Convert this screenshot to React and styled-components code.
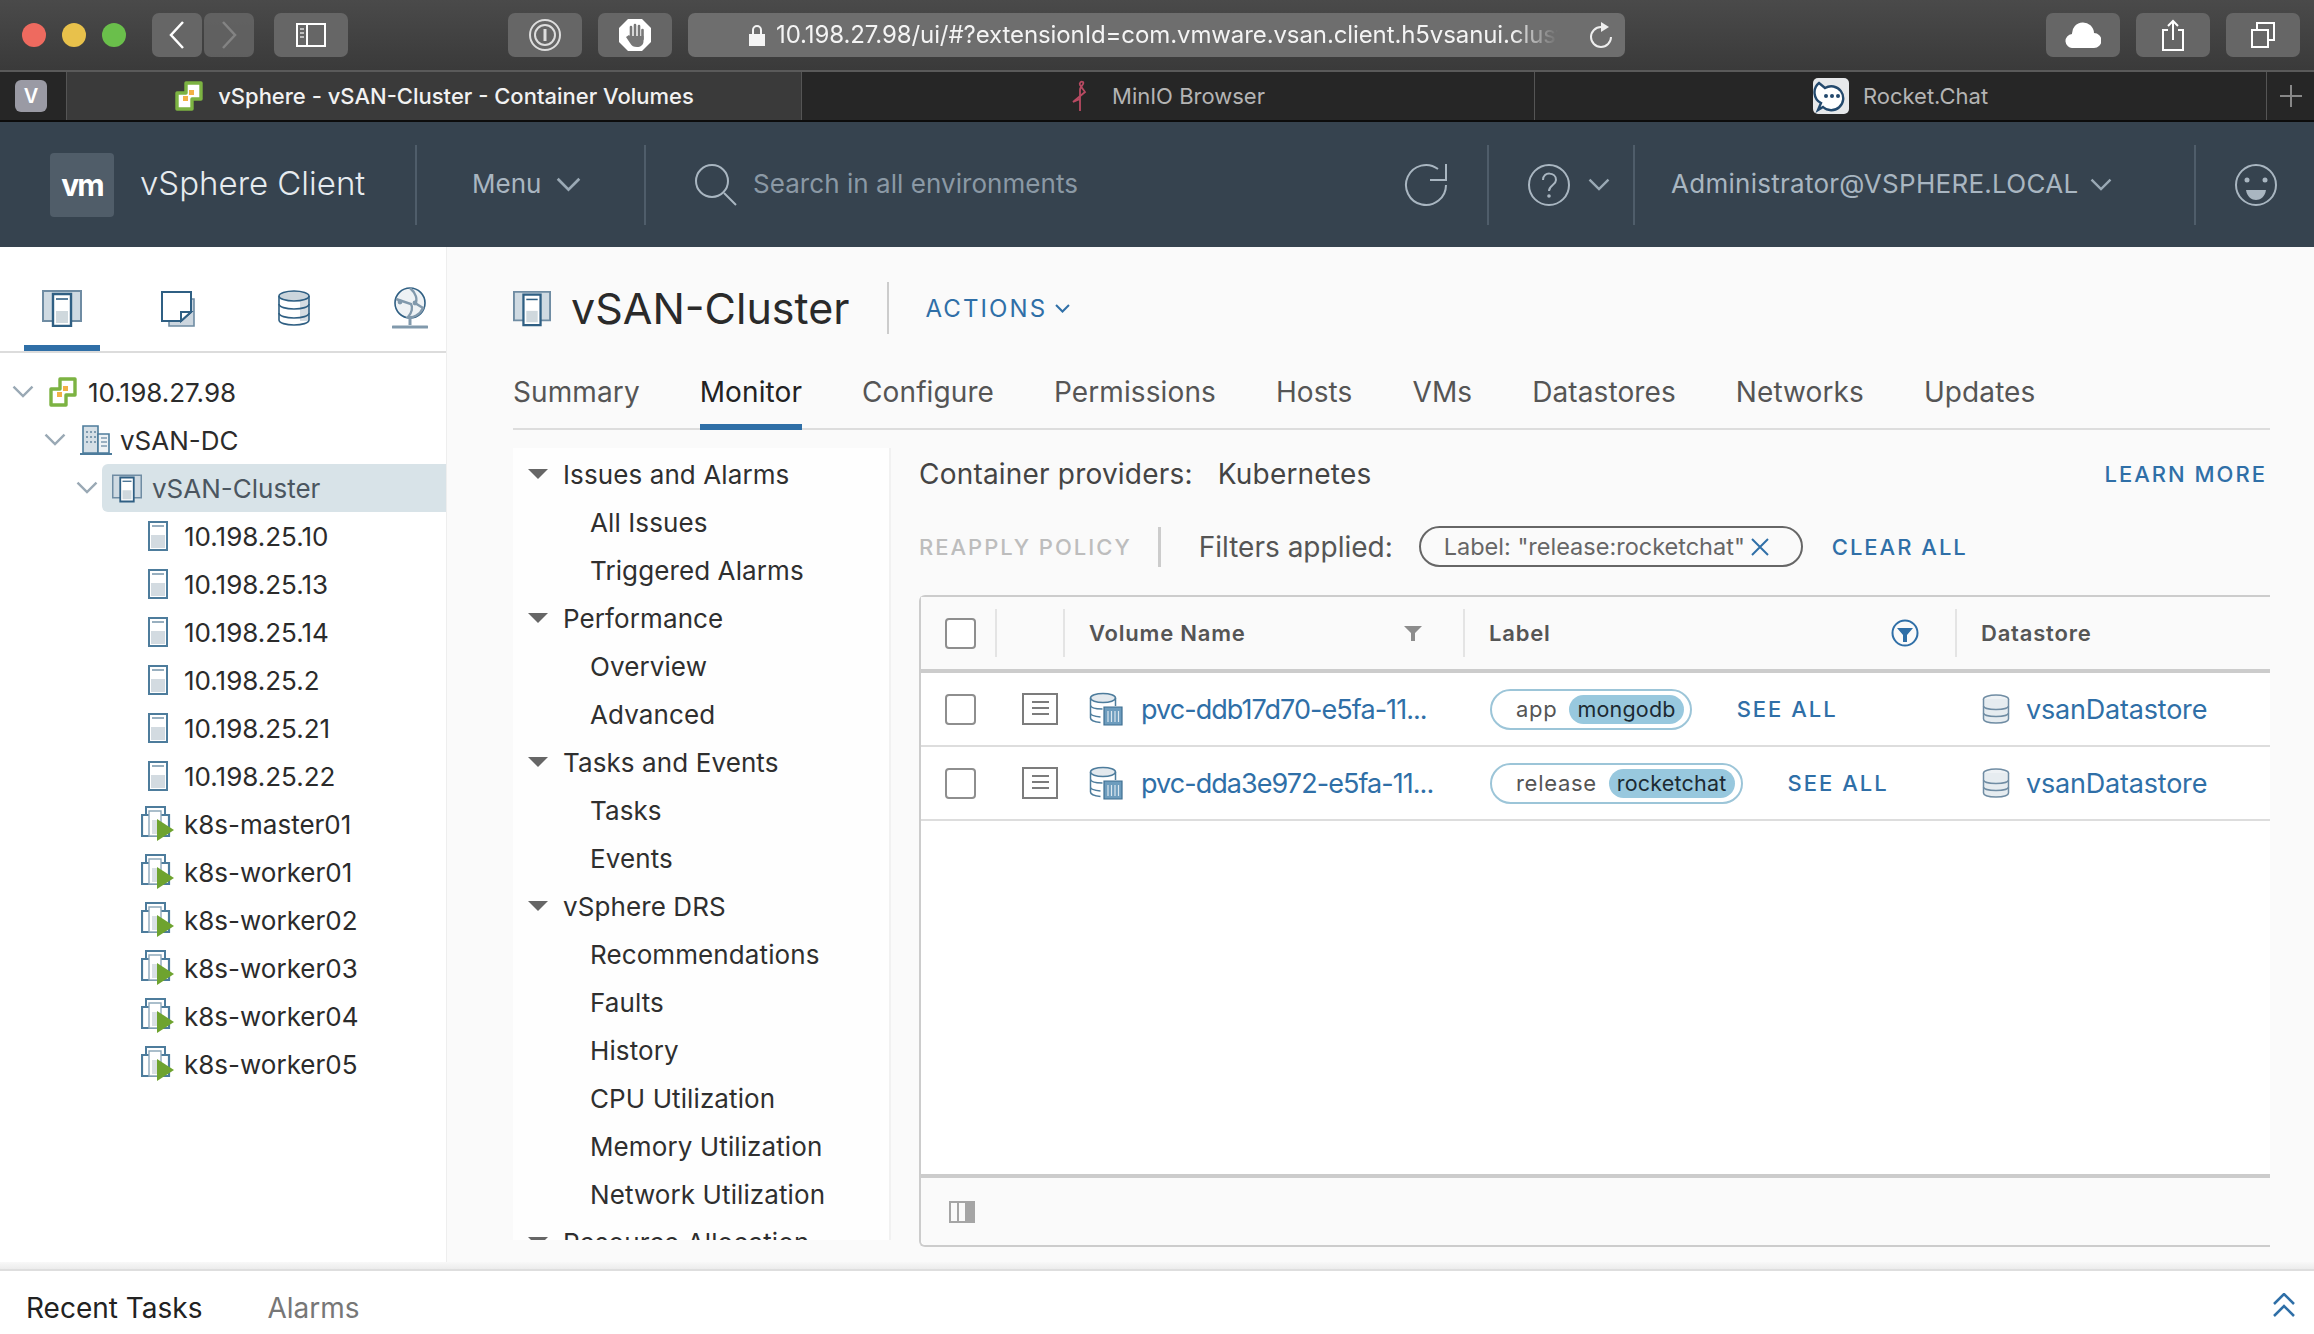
import React from "react";
import styled, { createGlobalStyle } from "styled-components";

const GlobalStyle = createGlobalStyle`
  html, body {
    margin: 0;
    padding: 0;
    width: 2314px;
    height: 1334px;
    overflow: hidden;
    background: #fafafa;
    font-family: "Inter", "Liberation Sans", sans-serif;
  }
  * { box-sizing: border-box; }
`;

const BLUE = "#2f6fa7";

/* ---------- icons ---------- */

const Chevron = ({ size = 22, color = "#9aa9b5", width = 2.4 }) => (
  <svg width={size} height={size * 0.6} viewBox="0 0 22 13" fill="none">
    <path d="M1.5 1.5 L11 11 L20.5 1.5" stroke={color} strokeWidth={width} />
  </svg>
);

const ClusterIcon = ({ w = 30, h = 30 }) => (
  <svg width={w} height={h} viewBox="0 0 40 38">
    <path d="M1 2h38v30H1z" fill="#cfdae2" stroke="#6f8ca3" strokeWidth="2" />
    <path d="M11 5h18v32H11z" fill="#fff" stroke="#2f5f83" strokeWidth="2.4" />
    <path d="M14 10h12" stroke="#2f5f83" strokeWidth="1.6" />
    <path d="M14 22h12v12H14z" fill="#cfd8dd" />
  </svg>
);

const HostIcon = () => (
  <svg width="20" height="30" viewBox="0 0 20 30">
    <path d="M1 1h18v28H1z" fill="#fff" stroke="#4d7c9c" strokeWidth="2" />
    <path d="M4 5h12" stroke="#7f9bb0" strokeWidth="1.6" />
    <path d="M3 14h14v13H3z" fill="#d3dbe1" />
  </svg>
);

const VcenterIcon = ({ w = 30 }) => (
  <svg width={w} height={w} viewBox="0 0 30 30">
    <path
      d="M12 2h15v16h-9v10H3V12h9z"
      fill="#fff"
      stroke="#7cb342"
      strokeWidth="3.4"
      strokeLinejoin="round"
    />
    <path d="M15 9h5v5h-5zM9 15h5v5H9z" fill="#f2b145" />
  </svg>
);

const DatacenterIcon = () => (
  <svg width="32" height="30" viewBox="0 0 32 30">
    <path d="M3 1h15v27H3z" fill="#d5dfe6" stroke="#4d7c9c" strokeWidth="1.6" />
    <path d="M18 9h11v19H18z" fill="#eef2f5" stroke="#4d7c9c" strokeWidth="1.6" />
    <path
      d="M6 6h2v2H6zM10 6h2v2h-2zM14 6h2v2h-2zM6 11h2v2H6zM10 11h2v2h-2zM14 11h2v2h-2zM6 16h2v2H6zM10 16h2v2h-2zM14 16h2v2h-2z"
      fill="#7f9bb0"
    />
    <path d="M21 13h6M21 17h6M21 21h6" stroke="#7f9bb0" strokeWidth="1.4" />
    <path d="M0 29h32" stroke="#4d7c9c" strokeWidth="2" />
  </svg>
);

const VmIcon = () => (
  <svg width="34" height="36" viewBox="0 0 34 36" fill="none">
    <path d="M5 9V1h19v8" stroke="#4d7c9c" strokeWidth="2" />
    <path d="M1 9h27v21H1z" fill="#fff" stroke="#4d7c9c" strokeWidth="2.2" />
    <path d="M8 5h12v25H8z" fill="#fff" stroke="#8fa9bb" strokeWidth="1.4" />
    <path d="M11 14h6v14h-6z" fill="#d9e0e5" />
    <path d="M16 13l17 11-17 11z" fill="#6ea32f" />
  </svg>
);

const NotesIcon = () => (
  <svg width="34" height="36" viewBox="0 0 34 36">
    <path d="M8 8h25v27H8z" fill="#ccd6df" stroke="#6f8ca3" strokeWidth="1.6" />
    <path d="M1 1h29v20L20 30H1z" fill="#fff" stroke="#2f5f83" strokeWidth="2" />
    <path d="M20 30v-9h10z" fill="#fff" stroke="#2f5f83" strokeWidth="2" />
  </svg>
);

const DatabaseIcon = ({ w = 32, h = 36, line = "#2f5f83" }) => (
  <svg width={w} height={h} viewBox="0 0 32 36" fill="none">
    <path d="M22 5h9v26h-9z" fill="#d5dce2" />
    <ellipse cx="16" cy="6" rx="15" ry="5" fill="#cbd5dc" stroke={line} strokeWidth="1.6" />
    <path d="M1 6v24c0 3 7 5 15 5s15-2 15-5V6" stroke={line} strokeWidth="1.6" />
    <path d="M1 14c0 3 7 5 15 5s15-2 15-5M1 23c0 3 7 5 15 5s15-2 15-5" stroke={line} strokeWidth="1.6" />
  </svg>
);

const GlobeIcon = () => (
  <svg width="36" height="42" viewBox="0 0 36 42" fill="none">
    <circle cx="18" cy="16" r="15" fill="#eef2f5" stroke="#2f5f83" strokeWidth="1.6" />
    <path d="M18 1c6 5 8 12 5 15l8 5c-3 7-10 10-15 9 4-4 5-10 3-13L4 12" stroke="#8199ac" strokeWidth="2.4" />
    <circle cx="8" cy="15" r="2.4" fill="#8199ac" />
    <circle cx="23" cy="16" r="2.4" fill="#8199ac" />
    <path d="M18 31v7" stroke="#8199ac" strokeWidth="3" />
    <path d="M1 40h34" stroke="#8199ac" strokeWidth="3" strokeLinecap="round" />
  </svg>
);

const PvcIcon = () => (
  <svg width="34" height="34" viewBox="0 0 34 34" fill="none">
    <ellipse cx="14" cy="6" rx="12.5" ry="4.5" fill="#e3e9ee" stroke="#4d7c9c" strokeWidth="1.5" />
    <path d="M1.5 6v20c0 2 4 4 10 4.5M26.5 6v8M1.5 13c0 2.5 5 4 12 4M1.5 21c0 2 4 3.5 10 4" stroke="#4d7c9c" strokeWidth="1.5" />
    <path d="M15 15h18v18H15z" fill="#6d9cbd" stroke="#3f6f92" strokeWidth="1.2" />
    <path d="M19 19v11M22.5 19v11M26 19v11M29.5 19v11" stroke="#dbe7ef" strokeWidth="1.2" />
  </svg>
);

const DetailIcon = () => (
  <svg width="36" height="32" viewBox="0 0 36 32" fill="none">
    <path d="M1 1h34v30H1z" stroke="#7c7c7c" strokeWidth="2" />
    <path d="M10 9h17M10 15h17M10 21h17" stroke="#7c7c7c" strokeWidth="2" />
  </svg>
);

const DatastoreIcon = () => (
  <svg width="28" height="30" viewBox="0 0 28 30" fill="none">
    <ellipse cx="14" cy="5" rx="12.5" ry="4" fill="#eef2f5" stroke="#6f8ca3" strokeWidth="1.5" />
    <path d="M1.5 5v20c0 2.5 5.5 4 12.5 4s12.5-1.5 12.5-4V5" fill="#e6ecf0" stroke="#6f8ca3" strokeWidth="1.5" />
    <path d="M1.5 12c0 2 5.5 3.5 12.5 3.5S26.5 14 26.5 12M1.5 19c0 2 5.5 3.5 12.5 3.5S26.5 21 26.5 19" stroke="#6f8ca3" strokeWidth="1.5" />
  </svg>
);

const HeaderFilter = () => (
  <svg width="20" height="20" viewBox="0 0 20 20">
    <path d="M1 3h18l-7 7v8h-4v-8z" fill="#8c8c8c" />
  </svg>
);

const ActiveFilter = () => (
  <svg width="28" height="28" viewBox="0 0 28 28" fill="none">
    <circle cx="14" cy="14" r="12.5" stroke={BLUE} strokeWidth="2" />
    <path d="M6 9h16l-6 7v7h-4v-7z" fill={BLUE} />
  </svg>
);

const BrowserIcon = ({ children, w = 34, h = 34, vb = "0 0 34 34", fill = "none" }) => (
  <svg width={w} height={h} viewBox={vb} fill={fill}>
    {children}
  </svg>
);

/* ---------- browser chrome ---------- */

const Toolbar = styled.div`
  height: 72px;
  display: flex;
  align-items: center;
  padding: 0 14px 1px 22px;
  background: linear-gradient(#4a4a4a, #3a3a3a);
  border-bottom: 2px solid #5a5a5a;
`;

const Light = styled.span`
  width: 24px;
  height: 24px;
  border-radius: 50%;
  margin-right: 16px;
  background: ${(p) => p.$color};
`;

const ToolButton = styled.div`
  width: ${(p) => p.$w || 74}px;
  height: 44px;
  margin-left: ${(p) => p.$gap ?? 16}px;
  display: flex;
  align-items: center;
  justify-content: center;
  border-radius: 7px;
  background: #666;
  opacity: ${(p) => (p.$dim ? 0.85 : 1)};
`;

const UrlBar = styled.div`
  width: 937px;
  height: 44px;
  margin-left: 16px;
  display: flex;
  align-items: center;
  padding-left: 61px;
  border-radius: 7px;
  background: #6e6e6e;
  color: #f4f4f4;
  font: 400 24px "Inter", sans-serif;
  letter-spacing: -0.1px;
  overflow: hidden;
  white-space: nowrap;
`;

const UrlText = styled.span`
  width: 782px;
  margin-left: 11px;
  overflow: hidden;
  -webkit-mask-image: linear-gradient(to right, #000 94%, transparent);
  mask-image: linear-gradient(to right, #000 94%, transparent);
`;

const UrlReload = styled.span`
  margin-left: auto;
  margin-right: 12px;
  display: flex;
`;

const RightTools = styled.div`
  margin-left: auto;
  display: flex;
`;

const TabStrip = styled.div`
  height: 50px;
  display: flex;
  background: #262626;
  border-bottom: 2px solid #0c0c0c;
`;

const PinnedCell = styled.div`
  width: 67px;
  display: flex;
  align-items: center;
  padding-left: 15px;
  border-right: 1px solid #555;
`;

const PinnedIcon = styled.div`
  width: 32px;
  height: 32px;
  border-radius: 6px;
  background: #9a9aa4;
  color: #fff;
  font: 600 20px "Inter", sans-serif;
  display: flex;
  align-items: center;
  justify-content: center;
`;

const BrowserTab = styled.div`
  width: ${(p) => p.$w}px;
  display: flex;
  align-items: center;
  justify-content: center;
  gap: ${(p) => p.$gap || 14}px;
  background: ${(p) => (p.$active ? "#3a3a3a" : "#262626")};
  color: ${(p) => (p.$active ? "#f2f2f2" : "#b4b4b4")};
  font: ${(p) => (p.$active ? 500 : 400)} 22px "Inter", sans-serif;
  border-right: 1px solid #555;
`;

const NewTab = styled.div`
  flex: 1;
  display: flex;
  align-items: center;
  justify-content: center;
`;

/* ---------- vsphere header ---------- */

const Header = styled.header`
  height: 125px;
  display: flex;
  align-items: center;
  background: #36434f;
  color: #a9b6c1;
  font: 400 26px "Inter", sans-serif;
`;

const Segment = styled.div`
  width: ${(p) => p.$w}px;
  height: 80px;
  display: flex;
  align-items: center;
  padding-left: ${(p) => p.$pad || 0}px;
  border-right: 2px solid #4f5d6a;
  white-space: nowrap;
  ${(p) => p.$last && "border-right: 0; flex: 1;"}
`;

const VmLogo = styled.div`
  width: 64px;
  height: 64px;
  border-radius: 4px;
  background: #505d69;
  color: #fff;
  display: flex;
  align-items: center;
  justify-content: center;
  font: 700 30px "Inter", sans-serif;
  letter-spacing: -2px;
`;

const Brand = styled.span`
  margin: 0 0 3px 26px;
  color: #e6ebef;
  font-size: 33px;
  font-weight: 300;
`;

const HeadLabel = styled.span`
  margin-bottom: 3px;
  letter-spacing: ${(p) => p.$track || 0}px;
`;

const SearchText = styled.span`
  margin: 0 0 3px 15px;
  color: #8b99a5;
  letter-spacing: 0.05px;
`;

const PushRight = styled.span`
  margin-left: auto;
  margin-right: ${(p) => p.$mr}px;
  display: flex;
`;

const Gap = styled.span`
  margin-left: ${(p) => p.$w}px;
  display: flex;
`;

/* ---------- sidebar ---------- */

const Body = styled.div`
  height: 1015px;
  display: flex;
  overflow: hidden;
`;

const Sidebar = styled.aside`
  width: 447px;
  flex: none;
  background: #fff;
  border-right: 1px solid #eee;
`;

const IconTabs = styled.div`
  height: 106px;
  display: flex;
  padding-left: 4px;
  border-bottom: 2px solid #dcdcdc;
`;

const IconTab = styled.div`
  width: 116px;
  flex: none;
  display: flex;
  flex-direction: column;
  align-items: center;
`;

const IconTabGlyph = styled.div`
  height: 98px;
  padding-top: ${(p) => p.$top}px;
`;

const IconTabBar = styled.div`
  width: 76px;
  height: 6px;
  background: ${(p) => (p.$active ? BLUE : "transparent")};
`;

const Tree = styled.div`
  padding-top: 15px;
`;

const TreeRow = styled.div`
  height: 48px;
  display: flex;
  align-items: center;
  padding-left: ${(p) => p.$indent}px;
  color: #2b2b2b;
  font-size: 26px;
  font-weight: 400;
`;

const TreeCaret = styled.span`
  width: 22px;
  margin-right: 4px;
  display: flex;
`;

const TreeBody = styled.div`
  flex: 1;
  height: 48px;
  display: flex;
  align-items: center;
  gap: ${(p) => p.$gap || 10}px;
  padding-left: 10px;
  border-radius: 6px 0 0 6px;
  ${(p) => p.$selected && "background: #d8e3e8; color: #4b5660;"}
`;

const IconSlot = styled.span`
  width: 36px;
  margin-right: 8px;
  display: flex;
  justify-content: center;
`;

/* ---------- main ---------- */

const Main = styled.main`
  flex: 1;
  display: flex;
  flex-direction: column;
  padding: 0 44px 15px 66px;
  background: #fafafa;
`;

const TitleRow = styled.div`
  height: 123px;
  display: flex;
  align-items: center;
  padding-bottom: 1px;
`;

const Title = styled.h1`
  margin: 0 38px 0 20px;
  font-size: 43px;
  font-weight: 400;
  color: #2a2a2a;
`;

const ActionsLink = styled.span`
  display: flex;
  align-items: center;
  gap: 8px;
  height: 52px;
  padding-left: 36px;
  border-left: 2px solid #ccc;
  color: ${BLUE};
  font-size: 24px;
  letter-spacing: 2.1px;
`;

const TabsRow = styled.nav`
  height: 60px;
  display: flex;
  gap: 60px;
  border-bottom: 2px solid #ddd;
`;

const TabItem = styled.span`
  height: 60px;
  line-height: 44px;
  font-size: 28px;
  letter-spacing: 0.1px;
  color: ${(p) => (p.$active ? "#222" : "#555")};
  border-bottom: ${(p) => (p.$active ? `6px solid ${BLUE}` : "0")};
`;

const Panels = styled.div`
  flex: 1;
  display: flex;
  min-height: 0;
`;

const MonitorNav = styled.div`
  width: 378px;
  flex: none;
  margin: 18px 0 7px;
  padding-top: 2px;
  overflow: hidden;
  background: #fefefe;
  border-right: 2px solid #f1f1f1;
`;

const NavRow = styled.div`
  height: 48px;
  display: flex;
  align-items: center;
  gap: 15px;
  padding-left: ${(p) => (p.$child ? 77 : 15)}px;
  font-size: 26px;
  letter-spacing: 0.1px;
  color: #2f2f2f;
  white-space: nowrap;
`;

const NavCaret = styled.span`
  width: 0;
  height: 0;
  border-left: 10px solid transparent;
  border-right: 10px solid transparent;
  border-top: 10px solid #666;
`;

const Content = styled.div`
  flex: 1;
  display: flex;
  flex-direction: column;
  margin: 20px 0 0 28px;
  min-width: 0;
`;

const ProviderRow = styled.div`
  height: 48px;
  display: flex;
  align-items: center;
  font-size: 28px;
  letter-spacing: 0.2px;
  color: #444;
`;

const ProviderName = styled.span`
  margin-left: 25px;
`;

const CapsLink = styled.span`
  color: ${(p) => p.$color || BLUE};
  font-size: 22px;
  font-weight: 500;
  letter-spacing: 2px;
  white-space: nowrap;
  ${(p) => p.$right && "margin: 0 3px 0 auto;"}
`;

const FilterRow = styled.div`
  height: 41px;
  margin-top: 28px;
  display: flex;
  align-items: center;
  font-size: 28px;
  color: #555;
`;

const FilterDivider = styled.span`
  width: 3px;
  height: 40px;
  margin: 0 38px 0 26px;
  background: #ccc;
`;

const FilterChip = styled.span`
  width: 384px;
  height: 41px;
  margin: 0 29px 0 26px;
  display: flex;
  align-items: center;
  gap: 6px;
  padding-left: 23px;
  border: 2px solid #666;
  border-radius: 21px;
  font-size: 23.5px;
  color: #666;
  white-space: nowrap;
`;

const Grid = styled.section`
  flex: 1;
  margin-top: 28px;
  display: flex;
  flex-direction: column;
  border: 2px solid #ccc;
  border-right: 0;
  border-radius: 6px 0 0 6px;
  background: #fff;
`;

const gridColumns = "76px 68px 400px 492px 1fr";

const GridHead = styled.div`
  height: 76px;
  display: grid;
  grid-template-columns: ${gridColumns};
  align-items: center;
  background: #fafafa;
  border-bottom: 4px solid #ccc;
  font-size: 22px;
  font-weight: 600;
  color: #555;
  letter-spacing: 0.8px;
`;

const HeadCell = styled.div`
  height: 48px;
  display: flex;
  align-items: center;
  padding: ${(p) => (p.$check ? "0 0 0 24px" : `0 ${p.$right || 40}px 0 24px`)};
  justify-content: ${(p) => (p.$check ? "flex-start" : "space-between")};
  ${(p) => !p.$last && "border-right: 2px solid #e4e4e4;"}
`;

const GridRow = styled.div`
  height: 74px;
  display: grid;
  grid-template-columns: ${gridColumns};
  align-items: center;
  border-bottom: 2px solid #ddd;
  background: #fff;
`;

const Cell = styled.div`
  display: flex;
  align-items: center;
  padding-left: ${(p) => p.$pad || 0}px;
  gap: ${(p) => p.$gap || 0}px;
  white-space: nowrap;
`;

const CheckBox = styled.span`
  width: 31px;
  height: 31px;
  border: 2px solid #8e8e8e;
  border-radius: 4px;
  background: #fff;
`;

const RowLink = styled.span`
  font-size: 27px;
  color: ${BLUE};
  letter-spacing: ${(p) => p.$track || 0}px;
`;

const LabelPill = styled.span`
  height: 41px;
  display: flex;
  align-items: center;
  gap: 12px;
  padding: 0 6px 0 24px;
  margin-right: 45px;
  border: 2px solid #9cc5d8;
  border-radius: 21px;
  font-size: 22px;
  color: #555;
  letter-spacing: 0.7px;
`;

const LabelValue = styled.span`
  height: 29px;
  line-height: 29px;
  padding: 0 8px;
  border-radius: 15px;
  background: #98c8de;
  color: #1c2a33;
  font-size: 21.5px;
  letter-spacing: 0.2px;
`;

const GridSpace = styled.div`
  flex: 1;
`;

const GridFooter = styled.div`
  height: 71px;
  display: flex;
  align-items: center;
  padding-left: 28px;
  background: #fafafa;
  border-top: 4px solid #ccc;
  border-radius: 0 0 0 6px;
`;

const DrawerShade = styled.div`
  height: 7px;
  background: linear-gradient(#f8f8f8, #ececec);
`;

const Drawer = styled.footer`
  height: 65px;
  display: flex;
  align-items: center;
  padding: 10px 19px 0 26px;
  gap: 65px;
  background: #fff;
  border-top: 2px solid #dedede;
  font-size: 28px;
`;

const DrawerTab = styled.span`
  color: ${(p) => (p.$active ? "#222" : "#777")};
`;

const DrawerToggle = styled.span`
  margin: -6px 0 0 auto;
  display: flex;
`;

/* ---------- data ---------- */

const hosts = ["10.198.25.10", "10.198.25.13", "10.198.25.14", "10.198.25.2", "10.198.25.21", "10.198.25.22"];
const vms = ["k8s-master01", "k8s-worker01", "k8s-worker02", "k8s-worker03", "k8s-worker04", "k8s-worker05"];
const tabs = ["Summary", "Monitor", "Configure", "Permissions", "Hosts", "VMs", "Datastores", "Networks", "Updates"];
const nav = [
  ["Issues and Alarms", ["All Issues", "Triggered Alarms"]],
  ["Performance", ["Overview", "Advanced"]],
  ["Tasks and Events", ["Tasks", "Events"]],
  ["vSphere DRS", ["Recommendations", "Faults", "History", "CPU Utilization", "Memory Utilization", "Network Utilization"]],
  ["Resource Allocation", []],
];
const volumes = [
  { name: "pvc-ddb17d70-e5fa-11...", key: "app", value: "mongodb" },
  { name: "pvc-dda3e972-e5fa-11...", key: "release", value: "rocketchat" },
];

export default function App() {
  return (
    <>
      <GlobalStyle />
      <Toolbar>
        <Light $color="#ee6a5f" />
        <Light $color="#e8c14b" />
        <Light $color="#6abf4b" />
        <ToolButton $w={50} $gap={10}>
          <BrowserIcon w={16} h={30} vb="0 0 16 30">
            <path d="M14 2L2 15l12 13" stroke="#fff" strokeWidth="2.5" />
          </BrowserIcon>
        </ToolButton>
        <ToolButton $w={50} $gap={2} $dim>
          <BrowserIcon w={16} h={30} vb="0 0 16 30">
            <path d="M2 2l12 13L2 28" stroke="#8f8f8f" strokeWidth="2.5" />
          </BrowserIcon>
        </ToolButton>
        <ToolButton $gap={20}>
          <BrowserIcon w={30} h={24} vb="0 0 30 24">
            <path d="M1 1h28v22H1zM11 1v22" stroke="#fff" strokeWidth="2" />
            <path d="M4 6h4M4 10h4M4 14h4" stroke="#ddd" strokeWidth="1.5" />
          </BrowserIcon>
        </ToolButton>
        <ToolButton $gap={160}>
          <BrowserIcon>
            <circle cx="17" cy="17" r="15" stroke="#ddd" strokeWidth="2" />
            <circle cx="17" cy="17" r="10" stroke="#ddd" strokeWidth="2" />
            <path d="M17 11v12" stroke="#ddd" strokeWidth="3" />
          </BrowserIcon>
        </ToolButton>
        <ToolButton>
          <BrowserIcon>
            <path d="M10 1h14l9 9v14l-9 9H10l-9-9V10z" fill="#fff" />
            <path d="M13 9v11M17 7v13M21 8v12M24.5 12v9" stroke="#777" strokeWidth="2.6" strokeLinecap="round" />
            <path d="M12 18h13.5v5c0 4-3 6-6.500 6s-5-1-7-4l-4-6 3-2z" fill="#777" />
          </BrowserIcon>
        </ToolButton>
        <UrlBar>
          <BrowserIcon w={16} h={22} vb="0 0 16 22">
            <path d="M4 10V6a4 4 0 018 0v4" stroke="#f4f4f4" strokeWidth="2" />
            <path d="M0 10h16v12H0z" fill="#f4f4f4" />
          </BrowserIcon>
          <UrlText>10.198.27.98/ui/#?extensionId=com.vmware.vsan.client.h5vsanui.cluster</UrlText>
          <UrlReload>
            <BrowserIcon w={24} h={28} vb="0 0 24 28">
              <path d="M12 6a10 10 0 1010 10" stroke="#eee" strokeWidth="2" />
              <path d="M12 1l8 5-8 5z" fill="#eee" />
            </BrowserIcon>
          </UrlReload>
        </UrlBar>
        <RightTools>
          <ToolButton>
            <BrowserIcon w={36} h={26} vb="0 0 36 26" fill="#fff">
              <path d="M8 26a7 7 0 01-1-14 11 11 0 0122-1 7.5 7.5 0 010 15z" />
            </BrowserIcon>
          </ToolButton>
          <ToolButton>
            <BrowserIcon w={24} h={32} vb="0 0 24 32">
              <path d="M7 11H2v20h20V11h-5M12 21V2M7 7l5-5 5 5" stroke="#fff" strokeWidth="2" />
            </BrowserIcon>
          </ToolButton>
          <ToolButton>
            <BrowserIcon w={24} h={26} vb="0 0 24 26">
              <path d="M1 8h16v17H1zM6 8V1h17v17h-6" stroke="#fff" strokeWidth="2" />
            </BrowserIcon>
          </ToolButton>
        </RightTools>
      </Toolbar>

      <TabStrip>
        <PinnedCell>
          <PinnedIcon>V</PinnedIcon>
        </PinnedCell>
        <BrowserTab $w={735} $active>
          <VcenterIcon w={30} />
          vSphere - vSAN-Cluster - Container Volumes
        </BrowserTab>
        <BrowserTab $w={733} $gap={23}>
          <BrowserIcon w={18} h={32} vb="0 0 18 32">
            <path d="M9 31V10c0-4 5-6 3-8-2-1-4 1-3 3l5 7-12 10 7-3" stroke="#b84a62" strokeWidth="1.8" />
          </BrowserIcon>
          MinIO Browser
        </BrowserTab>
        <BrowserTab $w={732}>
          <BrowserIcon w={36} h={36} vb="0 0 36 36">
            <rect width="36" height="36" rx="5" fill="#e6e8ea" />
            <path d="M6 5l6 5a12 12 0 11-2 19l-5 3 3-7a12 12 0 01-2-20z" fill="#fff" stroke="#23496d" strokeWidth="2.4" />
            <circle cx="13" cy="18" r="2" fill="#23496d" />
            <circle cx="19" cy="18" r="2" fill="#23496d" />
            <circle cx="25" cy="18" r="2" fill="#23496d" />
          </BrowserIcon>
          Rocket.Chat
        </BrowserTab>
        <NewTab>
          <BrowserIcon w={22} h={22} vb="0 0 22 22">
            <path d="M11 0v22M0 11h22" stroke="#888" strokeWidth="2" />
          </BrowserIcon>
        </NewTab>
      </TabStrip>

      <Header>
        <Segment $w={417} $pad={50}>
          <VmLogo>vm</VmLogo>
          <Brand>vSphere Client</Brand>
        </Segment>
        <Segment $w={229} $pad={55}>
          <HeadLabel>Menu</HeadLabel>
          <Gap $w={15}>
            <Chevron size={25} />
          </Gap>
        </Segment>
        <Segment $w={843} $pad={48}>
          <svg width="44" height="44" viewBox="0 0 44 44" fill="none">
            <circle cx="18" cy="18" r="16" stroke="#a9b6c1" strokeWidth="2" />
            <path d="M30 30l12 12" stroke="#a9b6c1" strokeWidth="2" />
          </svg>
          <SearchText>Search in all environments</SearchText>
          <PushRight $mr={37}>
            <svg width="46" height="44" viewBox="0 0 46 44" fill="none">
              <path d="M42 22a20 20 0 11-8-16" stroke="#a9b6c1" strokeWidth="2" />
              <path d="M42 1v16H26" stroke="#a9b6c1" strokeWidth="2" />
            </svg>
          </PushRight>
        </Segment>
        <Segment $w={146} $pad={38}>
          <svg width="44" height="44" viewBox="0 0 44 44" fill="none">
            <circle cx="22" cy="22" r="20" stroke="#a9b6c1" strokeWidth="2" />
            <path d="M16 17c0-9 13-8 13 0 0 5-7 5-7 11" stroke="#a9b6c1" strokeWidth="2" />
            <circle cx="22" cy="33" r="1.8" fill="#a9b6c1" />
          </svg>
          <Gap $w={17}>
            <Chevron size={22} />
          </Gap>
        </Segment>
        <Segment $w={561} $pad={36}>
          <HeadLabel $track={0.27}>Administrator@VSPHERE.LOCAL</HeadLabel>
          <PushRight $mr={82}>
            <Chevron size={22} />
          </PushRight>
        </Segment>
        <Segment $last $pad={38}>
          <svg width="44" height="44" viewBox="0 0 44 44" fill="none">
            <circle cx="22" cy="22" r="20" stroke="#a9b6c1" strokeWidth="2" />
            <circle cx="13" cy="17" r="2.5" fill="#a9b6c1" />
            <circle cx="31" cy="17" r="2.5" fill="#a9b6c1" />
            <path d="M12 27h20c-1 7-6 10-10 10s-9-3-10-10z" fill="#a9b6c1" />
          </svg>
        </Segment>
      </Header>

      <Body>
        <Sidebar>
          <IconTabs>
            <IconTab>
              <IconTabGlyph $top={42}>
                <ClusterIcon w={40} h={38} />
              </IconTabGlyph>
              <IconTabBar $active />
            </IconTab>
            <IconTab>
              <IconTabGlyph $top={44}>
                <NotesIcon />
              </IconTabGlyph>
              <IconTabBar />
            </IconTab>
            <IconTab>
              <IconTabGlyph $top={43}>
                <DatabaseIcon />
              </IconTabGlyph>
              <IconTabBar />
            </IconTab>
            <IconTab>
              <IconTabGlyph $top={40}>
                <GlobeIcon />
              </IconTabGlyph>
              <IconTabBar />
            </IconTab>
          </IconTabs>
          <Tree>
            <TreeRow $indent={12}>
              <TreeCaret><Chevron /></TreeCaret>
              <TreeBody>
                <VcenterIcon />
                10.198.27.98
              </TreeBody>
            </TreeRow>
            <TreeRow $indent={44}>
              <TreeCaret><Chevron /></TreeCaret>
              <TreeBody $gap={8}>
                <DatacenterIcon />
                vSAN-DC
              </TreeBody>
            </TreeRow>
            <TreeRow $indent={76}>
              <TreeCaret><Chevron /></TreeCaret>
              <TreeBody $selected>
                <ClusterIcon />
                vSAN-Cluster
              </TreeBody>
            </TreeRow>
            {hosts.map((h) => (
              <TreeRow key={h} $indent={140}>
                <IconSlot><HostIcon /></IconSlot>
                {h}
              </TreeRow>
            ))}
            {vms.map((v) => (
              <TreeRow key={v} $indent={140}>
                <IconSlot><VmIcon /></IconSlot>
                {v}
              </TreeRow>
            ))}
          </Tree>
        </Sidebar>

        <Main>
          <TitleRow>
            <ClusterIcon w={38} h={38} />
            <Title>vSAN-Cluster</Title>
            <ActionsLink>
              ACTIONS
              <Chevron size={15} color={BLUE} width={3} />
            </ActionsLink>
          </TitleRow>
          <TabsRow>
            {tabs.map((t) => (
              <TabItem key={t} $active={t === "Monitor"}>{t}</TabItem>
            ))}
          </TabsRow>
          <Panels>
            <MonitorNav>
              {nav.map(([group, items]) => (
                <React.Fragment key={group}>
                  <NavRow>
                    <NavCaret />
                    {group}
                  </NavRow>
                  {items.map((i) => (
                    <NavRow key={i} $child>{i}</NavRow>
                  ))}
                </React.Fragment>
              ))}
            </MonitorNav>
            <Content>
              <ProviderRow>
                Container providers:
                <ProviderName>Kubernetes</ProviderName>
                <CapsLink $right>LEARN MORE</CapsLink>
              </ProviderRow>
              <FilterRow>
                <CapsLink $color="#bdbdbd">REAPPLY POLICY</CapsLink>
                <FilterDivider />
                Filters applied:
                <FilterChip>
                  Label: "release:rocketchat"
                  <svg width="18" height="18" viewBox="0 0 18 18" fill="none">
                    <path d="M1 1l16 16M17 1L1 17" stroke={BLUE} strokeWidth="2" />
                  </svg>
                </FilterChip>
                <CapsLink>CLEAR ALL</CapsLink>
              </FilterRow>
              <Grid>
                <GridHead>
                  <HeadCell $check><CheckBox /></HeadCell>
                  <HeadCell />
                  <HeadCell>Volume Name<HeaderFilter /></HeadCell>
                  <HeadCell $right={36}>Label<ActiveFilter /></HeadCell>
                  <HeadCell $last>Datastore</HeadCell>
                </GridHead>
                {volumes.map((v) => (
                  <GridRow key={v.name}>
                    <Cell $pad={24}><CheckBox /></Cell>
                    <Cell $pad={25}><DetailIcon /></Cell>
                    <Cell $pad={24} $gap={18}>
                      <PvcIcon />
                      <RowLink $track={-0.95}>{v.name}</RowLink>
                    </Cell>
                    <Cell $pad={25}>
                      <LabelPill>
                        {v.key}
                        <LabelValue>{v.value}</LabelValue>
                      </LabelPill>
                      <CapsLink>SEE ALL</CapsLink>
                    </Cell>
                    <Cell $pad={25} $gap={16}>
                      <DatastoreIcon />
                      <RowLink $track={-0.2}>vsanDatastore</RowLink>
                    </Cell>
                  </GridRow>
                ))}
                <GridSpace />
                <GridFooter>
                  <svg width="26" height="22" viewBox="0 0 26 22" fill="none">
                    <path d="M1 1h24v20H1z" stroke="#a5a5a5" strokeWidth="2" />
                    <path d="M16 1h9v20h-9z" fill="#a5a5a5" />
                    <path d="M9 1v20" stroke="#a5a5a5" strokeWidth="2" />
                  </svg>
                </GridFooter>
              </Grid>
            </Content>
          </Panels>
        </Main>
      </Body>

      <DrawerShade />
      <Drawer>
        <DrawerTab $active>Recent Tasks</DrawerTab>
        <DrawerTab>Alarms</DrawerTab>
        <DrawerToggle>
          <svg width="22" height="24" viewBox="0 0 22 24" fill="none">
            <path d="M1 11l10-10 10 10M1 23l10-10 10 10" stroke={BLUE} strokeWidth="2.5" />
          </svg>
        </DrawerToggle>
      </Drawer>
    </>
  );
}
